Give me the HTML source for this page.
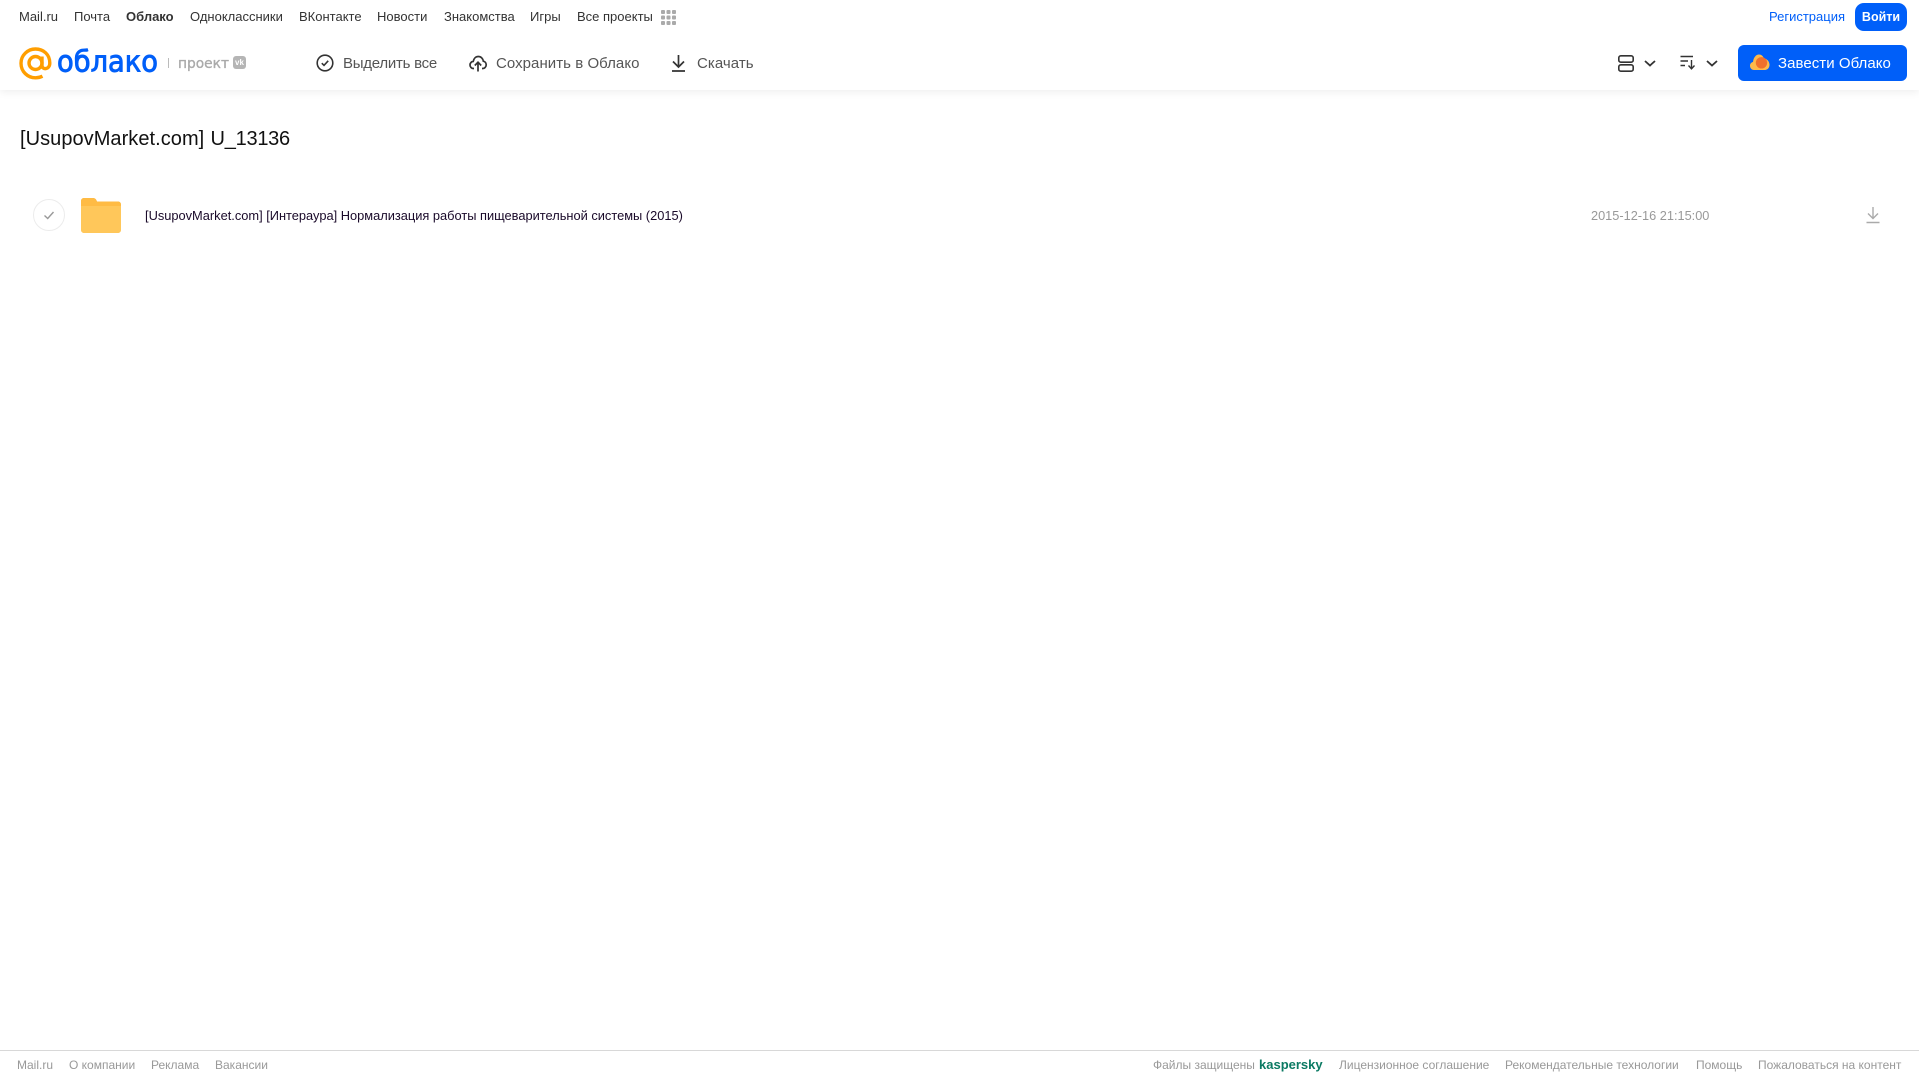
<!DOCTYPE html>
<html lang="ru"><head><meta charset="utf-8"><title>Облако</title>
<style>
html,body{margin:0;padding:0;background:#fff}
body{width:1919px;height:1079px;position:relative;overflow:hidden;font-family:"Liberation Sans",sans-serif}
.t{position:absolute;white-space:nowrap;line-height:16px}
.n{top:9px;font-size:13px;color:#333}
.a{top:54.500px;font-size:15px;color:#555;line-height:18px;letter-spacing:.05px}
.f{top:1057px;font-size:12px;color:#999}
svg{position:absolute;overflow:visible}
</style></head><body>
<div style="position:absolute;left:0;top:0;width:1919px;height:90px;background:#fff;box-shadow:0 2px 8px rgba(0,0,0,.07)"></div>
<span class="t n" style="left:19px">Mail.ru</span>
<span class="t n" style="left:74px">Почта</span>
<span class="t n" style="left:126px;font-weight:bold">Облако</span>
<span class="t n" style="left:190px">Одноклассники</span>
<span class="t n" style="left:299px">ВКонтакте</span>
<span class="t n" style="left:377px">Новости</span>
<span class="t n" style="left:444px">Знакомства</span>
<span class="t n" style="left:530px">Игры</span>
<span class="t n" style="left:577px">Все проекты</span>
<svg style="left:661px;top:10px" width="15" height="15" fill="#aaa"><rect x="0" y="0" width="4" height="4" rx="1"/><rect x="5.500" y="0" width="4" height="4" rx="1"/><rect x="11" y="0" width="4" height="4" rx="1"/><rect x="0" y="5.500" width="4" height="4" rx="1"/><rect x="5.500" y="5.500" width="4" height="4" rx="1"/><rect x="11" y="5.500" width="4" height="4" rx="1"/><rect x="0" y="11" width="4" height="4" rx="1"/><rect x="5.500" y="11" width="4" height="4" rx="1"/><rect x="11" y="11" width="4" height="4" rx="1"/></svg>
<span class="t n" style="left:1769px;color:#005ff9">Регистрация</span>
<div style="position:absolute;left:1855px;top:3px;width:52px;height:28px;border-radius:9px;background:#005ff9;color:#fff;font-size:12.500px;font-weight:bold;text-align:center;line-height:28px">Войти</div>

<!-- logo -->
<svg style="left:19px;top:47px" width="33" height="33" viewBox="0 0 33 33" fill="none" stroke="#ff9e00" stroke-width="3.400"><circle cx="16.500" cy="16" r="6.500"/><path d="M23 9.500V18.500C23 23 30.800 23 30.800 16C30.800 7.500 24.500 2 16.500 2C8.500 2 2 8.500 2 16.200C2 24.500 8.500 30.800 16.500 30.800C19.500 30.800 21.500 30.200 23.500 29.200"/></svg>
<svg style="left:56px;top:42px" width="106" height="40"><text x="1" y="29.500" font-family="'DejaVu Sans','Liberation Sans',sans-serif" font-size="29" fill="#005ff9" stroke="#005ff9" stroke-width=".9" textLength="101" lengthAdjust="spacingAndGlyphs">облако</text></svg>
<div style="position:absolute;left:168px;top:58px;width:1px;height:10px;background:#bbb"></div>
<svg style="left:178px;top:54px" width="52" height="18"><text x="0" y="14" font-family="'DejaVu Sans',sans-serif" font-size="14" fill="#aaa" stroke="#aaa" stroke-width=".35" textLength="51" lengthAdjust="spacingAndGlyphs">проект</text></svg>
<div style="position:absolute;left:233px;top:56px;width:13px;height:13px;border-radius:3px;background:#b5b5b5;color:#fff;font-size:8px;font-weight:bold;line-height:13px;text-align:center">vk</div>

<!-- actions -->
<svg style="left:316px;top:54px" width="18" height="18" fill="none" stroke="#333" stroke-width="1.600"><circle cx="9" cy="9" r="7.800"/><path d="M5.800 9.200L8 11.400L12.200 6.800"/></svg>
<span class="t a" style="left:343px;letter-spacing:-.25px">Выделить все</span>
<svg style="left:469px;top:54px" width="18" height="18" fill="none" stroke="#333" stroke-width="1.700"><path d="M5 14.500H4.500C2.500 14.500 1 13 1 11C1 9 2.500 7.500 4.200 7.400C4.800 4.500 6.800 2.500 9.300 2.500C12 2.500 14 4.500 14.300 7.200C16 7.500 17.200 9 17.200 10.800C17.200 13 15.500 14.500 13.500 14.500H13"/><path d="M9 17.500V8.500M5.800 11.500L9 8.200L12.200 11.500"/></svg>
<span class="t a" style="left:496px">Сохранить в Облако</span>
<svg style="left:671px;top:54px" width="15" height="18" fill="none" stroke="#333" stroke-width="1.700"><path d="M7.500 1V12.500M2 7.500L7.500 13L13 7.500M1 17H14"/></svg>
<span class="t a" style="left:697px">Скачать</span>

<!-- right controls -->
<svg style="left:1618px;top:55px" width="16" height="17" fill="none" stroke="#333" stroke-width="1.600"><rect x=".8" y=".8" width="14.400" height="6.400" rx="2"/><rect x=".8" y="9.800" width="14.400" height="6.400" rx="2"/></svg>
<svg style="left:1644px;top:60px" width="12" height="7" fill="none" stroke="#333" stroke-width="1.800"><path d="M1 1L6 5.500L11 1"/></svg>
<svg style="left:1680px;top:55px" width="17" height="15" fill="none" stroke="#333" stroke-width="1.400"><path d="M.5 1.500H13M.5 6H8M.5 10.500H5M11.500 5V14M8.500 10.500L11.500 13.800L14.500 10.500"/></svg>
<svg style="left:1706px;top:60px" width="12" height="7" fill="none" stroke="#333" stroke-width="1.800"><path d="M1 1L6 5.500L11 1"/></svg>
<div style="position:absolute;left:1738px;top:45px;width:169px;height:36px;border-radius:6px;background:#005ff9"></div>
<svg style="left:1750px;top:54px" width="20" height="17"><path d="M4 16C1.500 16 0 14 0 11.800C0 9.800 1.300 8.300 3 8C3.500 3.500 6 0.500 9 0.500C11.500 0.500 13 2 14 4.500C17 4.800 19.500 7.500 19.500 10.800C19.500 13.800 17.500 16 15 16Z" fill="#ffb94a"/><circle cx="11.500" cy="8.800" r="5.700" fill="#f0702c"/></svg>
<span class="t a" style="left:1778px;color:#fff">Завести Облако</span>

<!-- title -->
<span class="t" style="left:20px;top:127px;font-size:20px;line-height:24px;color:#111;letter-spacing:.05px">[UsupovMarket.com]</span>
<span class="t" style="left:210.500px;top:127px;font-size:20px;line-height:24px;color:#111;letter-spacing:-.25px">U_13136</span>

<!-- row -->
<svg style="left:33px;top:199px" width="32" height="32" fill="none"><circle cx="16" cy="16" r="15.500" stroke="#ececec"/><path d="M11.500 16.500L14.700 19.500L20.500 13" stroke="#999" stroke-width="1.400"/></svg>
<svg style="left:81px;top:198px" width="40" height="35"><path d="M3 0H12C14 0 15 1 16 3.500H37C38.700 3.500 40 4.800 40 6.500V32C40 33.700 38.700 35 37 35H3C1.300 35 0 33.700 0 32V3C0 1.300 1.300 0 3 0Z" fill="#ffc75a"/><path d="M0 8H40V6.500C40 4.800 38.700 3.500 37 3.500H16C15 1 14 0 12 0H3C1.300 0 0 1.300 0 3Z" fill="#ffbb44"/></svg>
<span class="t" style="left:145px;top:208px;font-size:12.840px;color:#1a0a2a">[UsupovMarket.com] [Интераура] Нормализация работы пищеварительной системы (2015)</span>
<span class="t" style="left:1591px;top:208px;font-size:12.750px;color:#999">2015-12-16 21:15:00</span>
<svg style="left:1866px;top:206px" width="14" height="18" fill="none" stroke="#aaa" stroke-width="1.400"><path d="M7 1V12M2 7.500L7 12.500L12 7.500M.5 16.500H13.500"/></svg>

<!-- footer -->
<div style="position:absolute;left:0;top:1050px;width:1919px;height:1px;background:#d8d8d8"></div>
<span class="t f" style="left:17px">Mail.ru</span>
<span class="t f" style="left:69px">О компании</span>
<span class="t f" style="left:151px">Реклама</span>
<span class="t f" style="left:215px">Вакансии</span>
<span class="t f" style="left:1153px">Файлы защищены</span>
<span class="t f" style="left:1259px;color:#0b7a63;font-weight:bold;font-size:13px">kaspersky</span>
<span class="t f" style="left:1339px">Лицензионное соглашение</span>
<span class="t f" style="left:1505px">Рекомендательные технологии</span>
<span class="t f" style="left:1696px">Помощь</span>
<span class="t f" style="left:1758px">Пожаловаться на контент</span>
</body></html>
